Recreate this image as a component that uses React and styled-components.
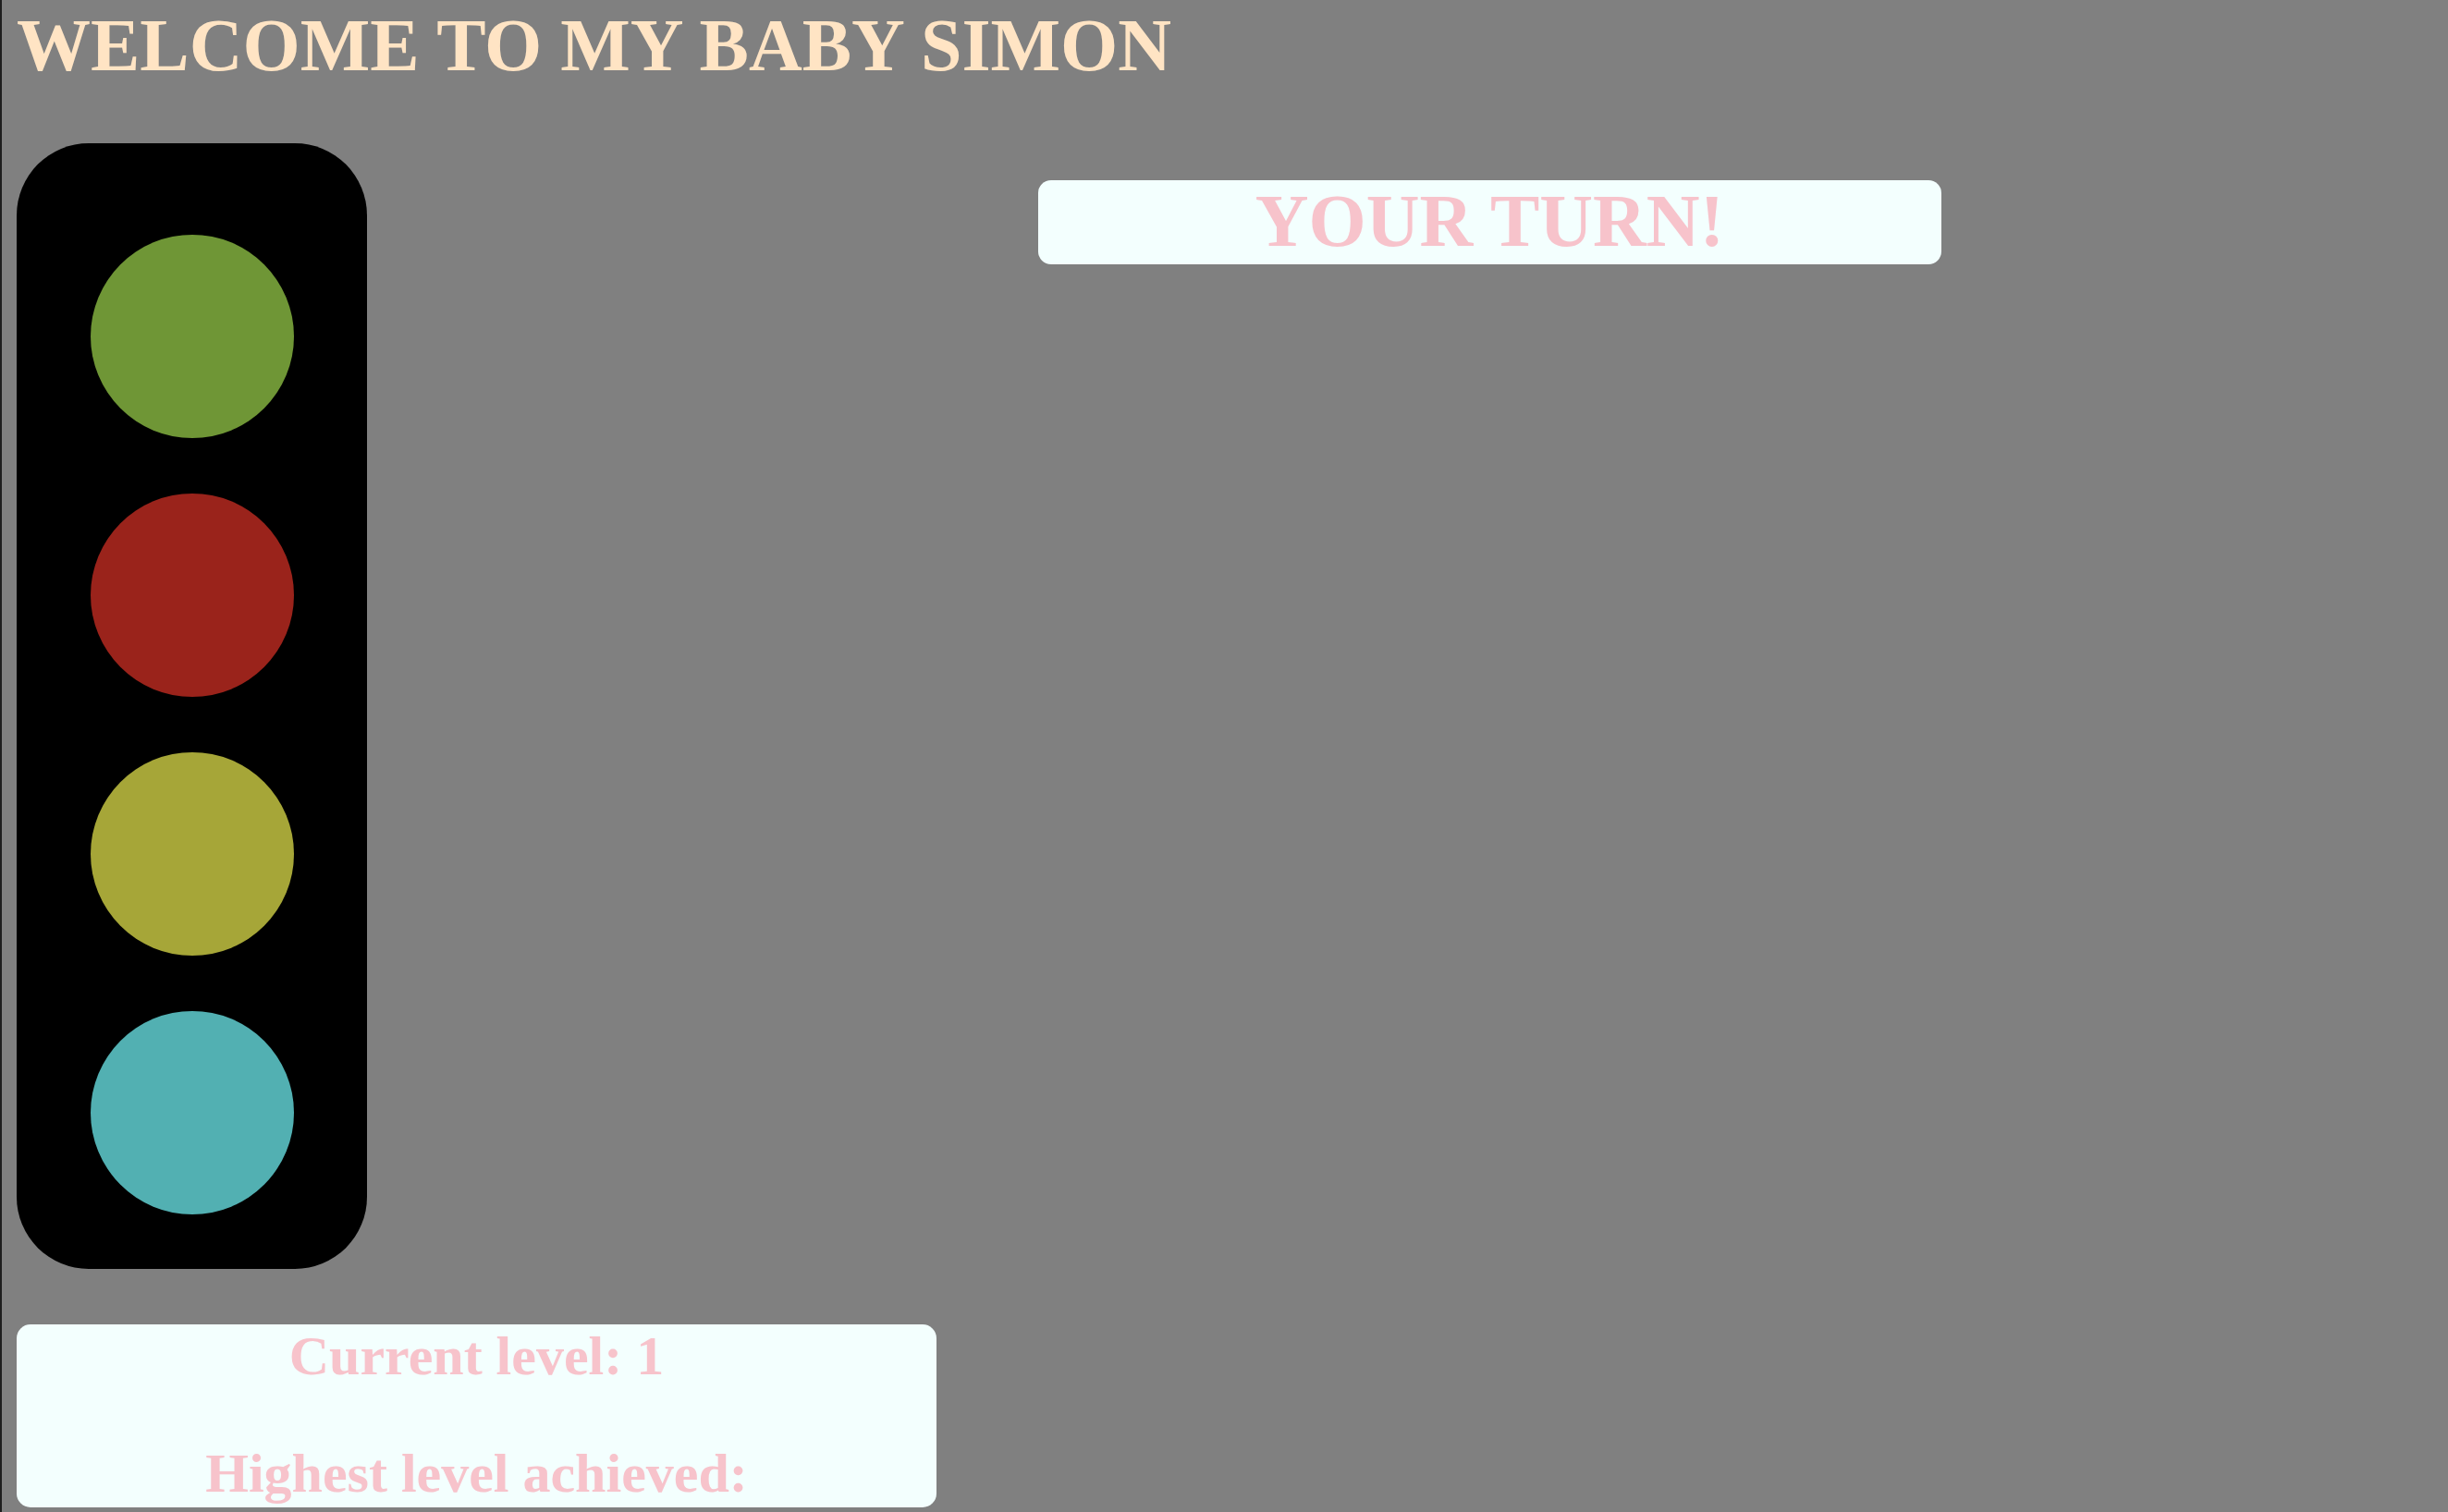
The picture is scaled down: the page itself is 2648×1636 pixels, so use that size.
import React from "react";
import styled, { createGlobalStyle } from "styled-components";

const GlobalStyle = createGlobalStyle`
  html, body {
    margin: 0;
    padding: 0;
    background: #808080;
    overflow: hidden;
  }
  body {
    font-family: "Liberation Serif", "Times New Roman", serif;
  }
`;

const Page = styled.div`
  box-sizing: border-box;
  min-height: 1636px;
  border-left: 2px solid #1e1e1e;
  padding: 9px 16px 0 16px;
  display: flex;
  flex-direction: column;
  align-items: flex-start;
`;

const Title = styled.h1`
  margin: 0;
  font-size: 80px;
  line-height: 80px;
  font-weight: 700;
  color: #ffe4c4;
  white-space: nowrap;
`;

const Main = styled.div`
  display: flex;
  align-items: flex-start;
  margin-top: 66px;
`;

const Lights = styled.div`
  box-sizing: border-box;
  width: 379px;
  padding: 99px 0 59px;
  background: #000;
  border-radius: 78px;
  display: flex;
  flex-direction: column;
  align-items: center;
  gap: 60px;
`;

const Light = styled.div`
  width: 220px;
  height: 220px;
  border-radius: 50%;
  background: ${(p) => p.$color};
`;

const Message = styled.div`
  box-sizing: border-box;
  width: 977px;
  margin: 40px 0 0 726px;
  padding: 0 0 3px;
  background: #f3fffe;
  border-radius: 14px;
  text-align: center;
  font-size: 80px;
  line-height: 88px;
  font-weight: 700;
  color: #f7c3cb;
`;

const Stats = styled.div`
  box-sizing: border-box;
  width: 995px;
  margin-top: 60px;
  padding: 0 0 2px;
  background: #f3fffe;
  border-radius: 15px;
  display: flex;
  flex-direction: column;
  gap: 58px;
`;

const StatLine = styled.div`
  text-align: center;
  font-size: 60px;
  line-height: 69px;
  font-weight: 700;
  color: #f7c3cb;
  white-space: nowrap;
`;

const lights = ["#6f9636", "#9a231b", "#a6a638", "#52b0b2"];

export default function App() {
  return (
    <>
      <GlobalStyle />
      <Page>
        <Title>WELCOME TO MY BABY SIMON</Title>
        <Main>
          <Lights>
            {lights.map((c) => (
              <Light key={c} $color={c} />
            ))}
          </Lights>
          <Message>YOUR TURN!</Message>
        </Main>
        <Stats>
          <StatLine>Current level: 1</StatLine>
          <StatLine>Highest level achieved:</StatLine>
        </Stats>
      </Page>
    </>
  );
}
